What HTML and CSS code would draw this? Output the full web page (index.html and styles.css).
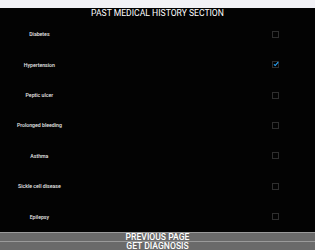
FILE: index.html
```html
<!DOCTYPE html>
<html lang="en">
<head>
  <meta charset="UTF-8">
  <meta name="viewport" content="width=device-width, initial-scale=1.0">
  <title>Past Medical History</title>
  <link rel="stylesheet" href="styles.css">
</head>
<body>

  <div class="status-bar"></div>

  <div class="screen">
    <h1 class="title">PAST MEDICAL HISTORY SECTION</h1>

    <div class="history-list">
      <div class="row">
        <span class="label">Diabetes</span>
        <span class="box"></span>
      </div>
      <div class="row">
        <span class="label">Hypertension</span>
        <span class="box checked">
          <svg viewBox="0 0 6 6" width="6" height="6"><path d="M0.9 3.4 L2.2 4.5 L5.2 1.2" fill="none" stroke="#29a8ff" stroke-width="1.1"/></svg>
        </span>
      </div>
      <div class="row">
        <span class="label">Peptic ulcer</span>
        <span class="box"></span>
      </div>
      <div class="row">
        <span class="label">Prolonged bleeding</span>
        <span class="box"></span>
      </div>
      <div class="row">
        <span class="label">Asthma</span>
        <span class="box"></span>
      </div>
      <div class="row">
        <span class="label">Sickle cell disease</span>
        <span class="box"></span>
      </div>
      <div class="row">
        <span class="label">Epilepsy</span>
        <span class="box"></span>
      </div>
    </div>

    <button class="nav-btn">PREVIOUS PAGE</button>
    <button class="nav-btn">GET DIAGNOSIS</button>
  </div>

</body>
</html>
```

FILE: styles.css
```css
body {
  margin: 0;
  padding: 0;
  background-color: #000;
  color: #fff;
  font-family: Roboto, "Liberation Sans", sans-serif;
  height: 250px;
  overflow: hidden;
  display: flex;
  flex-direction: column;
}
.status-bar {
  height: 8px;
  background-color: #f2f2f6;
}
.screen {
  flex: 1;
  display: flex;
  flex-direction: column;
  background-color: #030303;
}
.title {
  margin: 0;
  height: 11px;
  line-height: 11px;
  font-size: 8.6px;
  font-weight: normal;
  text-align: center;
}
.history-list {
  flex: 1;
  display: flex;
  flex-direction: column;
}
.row {
  flex: 1;
  display: grid;
  grid-template-columns: 1fr 1fr 1fr 1fr;
  align-items: center;
}
.label {
  grid-column: 1;
  text-align: center;
  font-size: 5.2px;
  font-weight: 500;
  color: #e8e8e8;
}
.box {
  grid-column: 4;
  justify-self: center;
  width: 5px;
  height: 5px;
  border: 1px solid #2e2e2e;
  position: relative;
}
.box svg {
  position: absolute;
  left: 0;
  top: -1px;
}
.nav-btn {
  height: 9px;
  margin: 0;
  padding: 0;
  border: none;
  border-top: 1px solid #9a9a9a;
  background-color: #6a6a6a;
  color: #fff;
  font-family: Roboto, "Liberation Sans", sans-serif;
  font-size: 8.6px;
  font-weight: 500;
  line-height: 8px;
  text-align: center;
  box-sizing: border-box;
  overflow: hidden;
}
```
